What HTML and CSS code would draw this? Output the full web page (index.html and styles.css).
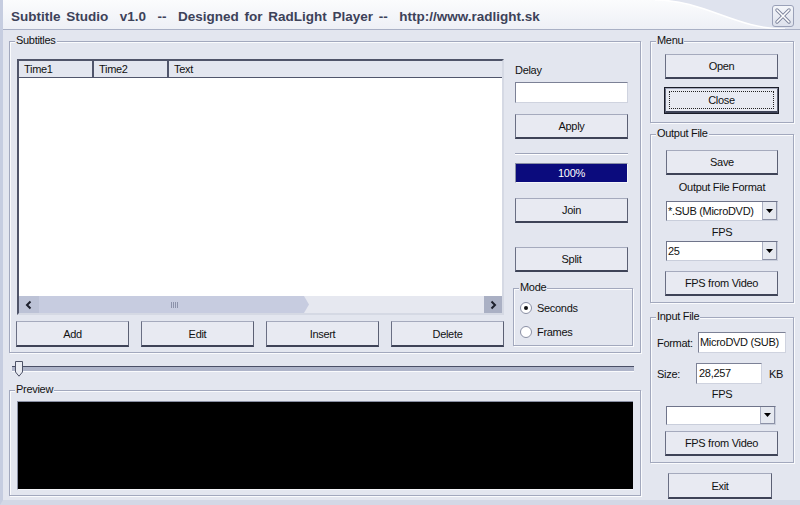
FILE: index.html
```html
<!DOCTYPE html>
<html lang="en">
<head>
    <meta charset="UTF-8">
    <title>Subtitle Studio</title>
    <link rel="stylesheet" href="styles.css">
</head>
<body>
<div class="window">
    <div class="titlebar">
        <svg class="swoosh" width="800" height="29" viewBox="0 0 800 29">
            <path d="M655 0 C 705 0, 735 29, 785 29 L800 29 L800 0 Z" fill="#dfe3ee"/>
            <path d="M655 0 C 705 0, 735 29, 785 29" fill="none" stroke="#ffffff" stroke-width="1.5"/>
        </svg>
        <span class="title">Subtitle Studio  v1.0  --  Designed for RadLight Player --  http://www.radlight.sk</span>
        <div class="close-x">
            <svg width="20" height="20" viewBox="0 0 20 20">
                <path d="M4 4 L16 16 M16 4 L4 16" stroke="#7d849c" stroke-width="3.4" stroke-linecap="round"/>
                <path d="M4 4 L16 16 M16 4 L4 16" stroke="#ffffff" stroke-width="1.6" stroke-linecap="round"/>
            </svg>
        </div>
    </div>

    <div class="client">
        <div class="left-col">
            <div class="group subs">
                <span class="group-label">Subtitles</span>
                <div class="subs-main">
                    <div class="list">
                        <div class="list-head">
                            <div class="col c1">Time1</div>
                            <div class="col c2">Time2</div>
                            <div class="col c3">Text</div>
                        </div>
                        <div class="list-body"></div>
                        <div class="hscroll">
                            <div class="sb-btn sb-left">
                                <svg width="10" height="10" viewBox="0 0 10 10"><polyline points="6.5,1.5 3,5 6.5,8.5" fill="none" stroke="#1c1f2c" stroke-width="2"/></svg>
                            </div>
                            <div class="sb-thumb"><span class="grip"></span></div>
                            <div class="sb-track"></div>
                            <div class="sb-btn sb-right">
                                <svg width="10" height="10" viewBox="0 0 10 10"><polyline points="3.5,1.5 7,5 3.5,8.5" fill="none" stroke="#1c1f2c" stroke-width="2"/></svg>
                            </div>
                        </div>
                    </div>
                    <div class="row-buttons">
                        <div class="btn">Add</div>
                        <div class="btn">Edit</div>
                        <div class="btn">Insert</div>
                        <div class="btn">Delete</div>
                    </div>
                </div>
                <div class="subs-side">
                    <div class="field-label">Delay</div>
                    <div class="input side-w"></div>
                    <div class="btn side-w apply">Apply</div>
                    <div class="sep"></div>
                    <div class="progress side-w">100%</div>
                    <div class="btn side-w join">Join</div>
                    <div class="btn side-w split">Split</div>
                    <div class="group mode">
                        <span class="group-label">Mode</span>
                        <div class="radio-row"><span class="radio checked"></span>Seconds</div>
                        <div class="radio-row frames"><span class="radio"></span>Frames</div>
                    </div>
                </div>
            </div>

            <div class="slider">
                <div class="slider-track"></div>
                <svg class="slider-thumb" width="8" height="16" viewBox="0 0 8 16">
                    <path d="M0.5 0.5 H7.5 V11 L4 15.2 L0.5 11 Z" fill="#e9ebf2" stroke="#4d5267"/>
                </svg>
            </div>

            <div class="group preview">
                <span class="group-label">Preview</span>
                <div class="screen"></div>
            </div>
        </div>

        <div class="right-col">
            <div class="group menu">
                <span class="group-label">Menu</span>
                <div class="btn">Open</div>
                <div class="btn focused close-btn">Close</div>
            </div>

            <div class="group output">
                <span class="group-label">Output File</span>
                <div class="btn save">Save</div>
                <div class="center-label first">Output File Format</div>
                <div class="select out-sel">
                    <span class="select-val">*.SUB (MicroDVD)</span>
                    <span class="select-btn"><svg width="7" height="4" viewBox="0 0 7 4"><path d="M0 0 H7 L3.5 4 Z" fill="#000"/></svg></span>
                </div>
                <div class="center-label">FPS</div>
                <div class="select out-sel fps">
                    <span class="select-val">25</span>
                    <span class="select-btn"><svg width="7" height="4" viewBox="0 0 7 4"><path d="M0 0 H7 L3.5 4 Z" fill="#000"/></svg></span>
                </div>
                <div class="btn fps-btn">FPS from Video</div>
            </div>

            <div class="group input-file">
                <span class="group-label">Input File</span>
                <div class="info-row">
                    <span class="info-label fmt">Format:</span>
                    <div class="input fmt-input">MicroDVD (SUB)</div>
                </div>
                <div class="info-row size-row">
                    <span class="info-label sz">Size:</span>
                    <div class="input size-input">28,257</div>
                    <span class="kb">KB</span>
                </div>
                <div class="center-label in-fps">FPS</div>
                <div class="select in-sel">
                    <span class="select-val"></span>
                    <span class="select-btn"><svg width="7" height="4" viewBox="0 0 7 4"><path d="M0 0 H7 L3.5 4 Z" fill="#000"/></svg></span>
                </div>
                <div class="btn fps-btn in-fps-btn">FPS from Video</div>
            </div>

            <div class="btn exit">Exit</div>
        </div>
    </div>
</div>
</body>
</html>
```

FILE: styles.css
```css
body {
    margin: 0;
    font-family: "Liberation Sans", Arial, sans-serif;
    font-size: 11px;
    letter-spacing: -0.3px;
    color: #111;
    background: #e3e6ef;
}
.window {
    width: 800px;
    height: 505px;
    overflow: hidden;
    background: #e3e6ef;
    box-sizing: border-box;
    border-left: 3px solid #c6cde0;
    border-bottom: 5px solid #d3d8e6;
}

/* title bar */
.titlebar {
    position: relative;
    height: 29px;
    margin-left: -3px;
    border-bottom: 1px solid #a9b0c5;
    background: linear-gradient(#fbfcfd, #eef0f6);
    display: flex;
    align-items: center;
}
.swoosh {
    position: absolute;
    left: 0;
    top: 0;
}
.title {
    position: relative;
    white-space: pre;
    font-weight: bold;
    font-size: 13.5px;
    letter-spacing: 0;
    word-spacing: 2px;
    color: #3d4259;
    margin-left: 11px;
    padding-top: 4px;
}
.close-x {
    position: relative;
    margin-left: auto;
    margin-right: 6px;
    margin-top: 2px;
    width: 20px;
    height: 20px;
    border: 1px solid #9aa1b8;
    border-radius: 3px;
    background: linear-gradient(#f4f6fa, #dde1ec);
}

/* layout */
.client {
    display: flex;
    gap: 9px;
    padding-left: 6px;
}
.left-col {
    width: 632px;
    display: flex;
    flex-direction: column;
}
.right-col {
    width: 144px;
    display: flex;
    flex-direction: column;
}

/* group boxes */
.group {
    position: relative;
    box-sizing: border-box;
    border: 1px solid #a2a8bd;
    box-shadow: inset 1px 1px 0 #fafbfd, 1px 1px 0 #fafbfd;
}
.group-label {
    position: absolute;
    top: -8px;
    left: 5px;
    padding: 0 1px;
    line-height: 13px;
    background: #e3e6ef;
}

/* buttons */
.btn {
    box-sizing: border-box;
    width: 113px;
    height: 25px;
    display: flex;
    align-items: center;
    justify-content: center;
    background: #e8eaf2;
    border-style: solid;
    border-width: 1px 1px 2px 1px;
    border-color: #a5aabd #5b6074 #3e4357 #6a6f84;
    position: relative;
}
.btn.focused {
    outline: 1px solid #1b1d28;
}
.btn.focused::after {
    content: "";
    position: absolute;
    inset: 2px 3px;
    border: 1px dotted #222;
}

/* inputs */
.input {
    box-sizing: border-box;
    height: 21px;
    background: #fff;
    border: 1px solid;
    border-color: #7c8196 #cfd3df #cfd3df #7c8196;
    line-height: 18px;
    padding-left: 2px;
    white-space: nowrap;
    overflow: hidden;
}
.select {
    box-sizing: border-box;
    height: 20px;
    display: flex;
    background: #fff;
    border: 1px solid;
    border-color: #6f748a #c9cedb #c9cedb #6f748a;
}
.select-val {
    flex: 1;
    line-height: 18px;
    padding-left: 1px;
    white-space: nowrap;
    overflow: hidden;
}
.select-btn {
    width: 15px;
    display: flex;
    align-items: center;
    justify-content: center;
    background: #e6e9f0;
    border-left: 1px solid #a9aec1;
    border-right: 1px solid #8c91a6;
    border-bottom: 1px solid #8c91a6;
    box-sizing: border-box;
}

/* subtitles group */
.subs {
    margin-top: 11px;
    height: 312px;
    padding: 17px 0 0 6px;
    display: flex;
    gap: 9px;
}
.subs-main {
    width: 488px;
}
.list {
    margin-left: 1px;
    width: 487px;
    height: 256px;
    box-sizing: border-box;
    border: 2px solid;
    border-color: #4f5469 #d5d9e4 #d5d9e4 #4f5469;
    background: #fff;
    display: flex;
    flex-direction: column;
}
.list-head {
    display: flex;
    height: 16px;
    background: #e3e6ef;
    border-bottom: 1px solid #50556b;
}
.col {
    box-sizing: border-box;
    border-right: 2px solid #50556b;
    padding-left: 5px;
    line-height: 17px;
}
.c1, .c2 {
    width: 75px;
}
.c3 {
    flex: 1;
    border-right: none;
}
.list-body {
    flex: 1;
}
.hscroll {
    height: 17px;
    display: flex;
    background: #e6e8f0;
}
.sb-btn {
    display: flex;
    align-items: center;
    justify-content: center;
}
.sb-left {
    width: 20px;
    background: #bcc2d6;
}
.sb-right {
    width: 18px;
    background: #aab0c4;
}
.sb-thumb {
    width: 270px;
    background: #c7cce0;
    clip-path: polygon(0 0, calc(100% - 5px) 0, 100% 50%, calc(100% - 5px) 100%, 0 100%);
    display: flex;
    align-items: center;
    justify-content: center;
}
.grip {
    width: 7px;
    height: 6px;
    background: repeating-linear-gradient(90deg, #8c92aa 0 1px, transparent 1px 2px);
}
.sb-track {
    flex: 1;
}
.row-buttons {
    display: flex;
    justify-content: space-between;
    margin-top: 6px;
}
.row-buttons .btn {
    height: 26px;
}

.subs-side {
    width: 120px;
    display: flex;
    flex-direction: column;
}
.side-w {
    width: 113px;
    margin-left: 2px;
}
.field-label {
    box-sizing: border-box;
    height: 23px;
    padding-top: 4px;
    line-height: 14px;
    margin-left: 2px;
}
.apply {
    margin-top: 11px;
}
.sep {
    margin: 14px 0 0 2px;
    width: 113px;
    height: 1px;
    background: #9ea4b9;
    border-bottom: 1px solid #fff;
}
.progress {
    margin-top: 8px;
    height: 20px;
    box-sizing: border-box;
    background: #0b0b7d;
    border: 1px solid;
    border-color: #8a90a6 #f4f5f9 #f4f5f9 #8a90a6;
    color: #fff;
    text-align: center;
    line-height: 18px;
}
.join {
    margin-top: 15px;
}
.split {
    margin-top: 24px;
}
.mode {
    margin-top: 16px;
    height: 58px;
    width: 120px;
    padding-top: 11px;
}
.radio-row {
    display: flex;
    align-items: center;
    height: 16px;
    padding-left: 6px;
    gap: 5px;
}
.radio-row.frames {
    margin-top: 8px;
}
.radio {
    width: 12px;
    height: 12px;
    box-sizing: border-box;
    border-radius: 50%;
    background: #fff;
    border: 1px solid #8a8fa4;
    position: relative;
}
.radio.checked::after {
    content: "";
    position: absolute;
    left: 3px;
    top: 3px;
    width: 4px;
    height: 4px;
    border-radius: 50%;
    background: #111;
}

/* slider */
.slider {
    position: relative;
    margin-top: 8px;
    height: 16px;
}
.slider-track {
    margin: 5px 0 0 3px;
    width: 622px;
    height: 6px;
    box-sizing: border-box;
    border-top: 1px solid #4a4f66;
    border-bottom: 1px solid #fafbfd;
    background: #aeb4c9;
}
.slider-thumb {
    position: absolute;
    left: 6px;
    top: 0;
}

/* preview */
.preview {
    margin-top: 13px;
    height: 106px;
    padding: 10px 0 0 7px;
}
.screen {
    width: 616px;
    height: 89px;
    box-sizing: border-box;
    background: #000;
    border-top: 1px solid #8a90a4;
    border-left: 1px solid #8a90a4;
    border-bottom: 1px solid #f4f5f9;
}

/* right column */
.menu {
    margin-top: 11px;
    height: 82px;
    padding: 12px 0 0 14px;
}
.close-btn {
    margin-top: 9px;
}
.output {
    margin-top: 11px;
    height: 169px;
    padding-top: 15px;
}
.save {
    margin-left: 15px;
    width: 112px;
}
.center-label {
    text-align: center;
    line-height: 14px;
    margin-top: 4px;
}
.center-label.first {
    margin-top: 5px;
}
.out-sel {
    margin: 7px 0 0 15px;
    width: 112px;
}
.out-sel.fps {
    margin-top: 2px;
}
.fps-btn {
    margin: 10px 0 0 14px;
}
.input-file {
    margin-top: 14px;
    height: 146px;
    padding-top: 14px;
}
.info-row {
    display: flex;
    align-items: center;
    margin-left: 6px;
}
.size-row {
    margin-top: 10px;
}
.info-label.fmt {
    width: 41px;
}
.info-label.sz {
    width: 39px;
}
.fmt-input {
    width: 88px;
    padding-left: 1px;
}
.size-input {
    width: 66px;
}
.kb {
    margin-left: 7px;
}
.center-label.in-fps {
    margin-top: 3px;
}
.in-sel {
    margin: 5px 0 0 15px;
    width: 110px;
    height: 19px;
}
.in-fps-btn {
    margin-top: 6px;
}
.exit {
    margin: 10px 0 0 18px;
    width: 104px;
    height: 26px;
}
```
